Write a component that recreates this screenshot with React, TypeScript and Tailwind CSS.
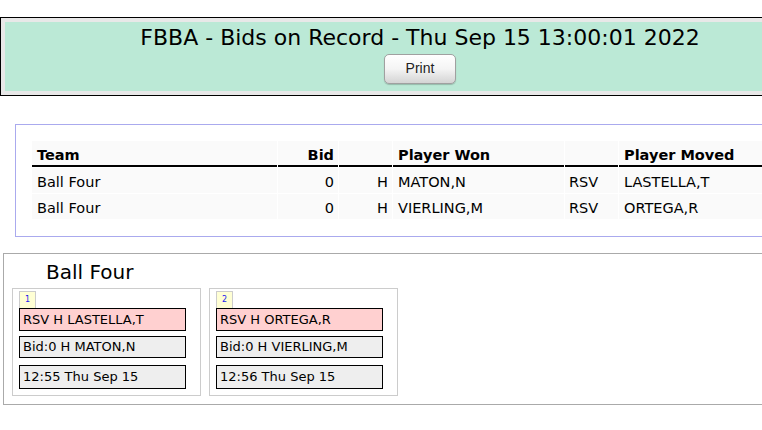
import React from 'react';

const bids = [
  { team: 'Ball Four', bid: '0', won: 'MATON,N', moved: 'LASTELLA,T', time: '12:55 Thu Sep 15' },
  { team: 'Ball Four', bid: '0', won: 'VIERLING,M', moved: 'ORTEGA,R', time: '12:56 Thu Sep 15' },
];

const font = "font-['DejaVu_Sans',Verdana,sans-serif]";

export default function App() {
  return (
    <div className={`w-[762px] h-[430px] overflow-hidden bg-white text-black ${font}`}>
      <div className="w-[1000px] pt-[17px]">
        {/* Header */}
        <div className="w-[840px] border border-black bg-[#e8e8e8] p-[4px]">
          <div className="bg-[#bbe9d6] pt-[3px] pb-[7px] flex flex-col items-center">
            <div className="text-[22px] leading-[25.6px]">FBBA - Bids on Record - Thu Sep 15 13:00:01 2022</div>
            <button className="mt-[3px] w-[72px] h-[30px] rounded-[5px] border border-[#a0a0a0] bg-gradient-to-b from-white via-[#f4f4f4] to-[#d4d4d4] shadow-[0_1px_1px_rgba(0,0,0,0.2)] font-['Liberation_Sans',Arial,sans-serif] text-[14px] text-[#222]">
              Print
            </button>
          </div>
        </div>

        {/* Bid table */}
        <div className="ml-[15px] mt-[28px] w-[820px] border border-[#aaaaee] pt-[15px] pb-[16px] px-[15px]">
          <table className="border-separate border-spacing-[1px] text-[14.5px] leading-[17px]">
            <thead>
              <tr className="font-bold">
                <th className="w-[245px] h-[26px] bg-[#fafafa] border-b-2 border-black pl-[5px] pt-[5px] text-left align-middle">Team</th>
                <th className="w-[60px] bg-[#fafafa] border-b-2 border-black pr-[4px] pt-[5px] text-right align-middle">Bid</th>
                <th className="w-[53px] bg-[#fafafa] border-b-2 border-black"></th>
                <th className="w-[171px] bg-[#fafafa] border-b-2 border-black pl-[5px] pt-[5px] text-left align-middle">Player Won</th>
                <th className="w-[53px] bg-[#fafafa] border-b-2 border-black"></th>
                <th className="w-[190px] bg-[#fafafa] border-b-2 border-black pl-[5px] pt-[5px] text-left align-middle">Player Moved</th>
              </tr>
            </thead>
            <tbody>
              {bids.map((b, i) => (
                <tr key={i}>
                  <td className="h-[25px] bg-[#fafafa] pl-[5px] pt-[5px] align-middle">{b.team}</td>
                  <td className="bg-[#fafafa] pr-[4px] pt-[5px] text-right align-middle">{b.bid}</td>
                  <td className="bg-[#fafafa] pr-[4px] pt-[5px] text-right align-middle">H</td>
                  <td className="bg-[#fafafa] pl-[5px] pt-[5px] align-middle">{b.won}</td>
                  <td className="bg-[#fafafa] pl-[4px] pt-[5px] align-middle">RSV</td>
                  <td className="bg-[#fafafa] pl-[5px] pt-[5px] align-middle">{b.moved}</td>
                </tr>
              ))}
            </tbody>
          </table>
        </div>

        {/* Team cards */}
        <div className="ml-[3px] mt-[16px] w-[900px] border border-[#aaaaaa] pt-[6px] pb-[8px] pl-[8px]">
          <div className="pl-[34px] text-[20px] leading-[24px]">Ball Four</div>
          <div className="mt-[4px] flex gap-[8px]">
            {bids.map((b, i) => (
              <div key={i} className="w-[189px] border border-[#cccccc] pl-[6px] pt-[2px] pb-[6px]">
                <div className="w-[17px] h-[17px] border border-b-0 border-[#cccccc] bg-[#ffffd4] text-[8px] leading-[15px] text-center text-[#2222ee]">
                  {i + 1}
                </div>
                <div className="w-[167px] h-[23px] border border-black bg-[#ffd0d0] pl-[3px] text-[13px] leading-[21px]">
                  RSV H {b.moved}
                </div>
                <div className="mt-[5px] w-[167px] h-[22px] border border-black bg-[#eeeeee] pl-[3px] text-[13px] leading-[20px]">
                  Bid:{b.bid} H {b.won}
                </div>
                <div className="mt-[7px] w-[167px] h-[24px] border border-black bg-[#eeeeee] pl-[3px] text-[13px] leading-[22px]">
                  {b.time}
                </div>
              </div>
            ))}
          </div>
        </div>
      </div>
    </div>
  );
}
